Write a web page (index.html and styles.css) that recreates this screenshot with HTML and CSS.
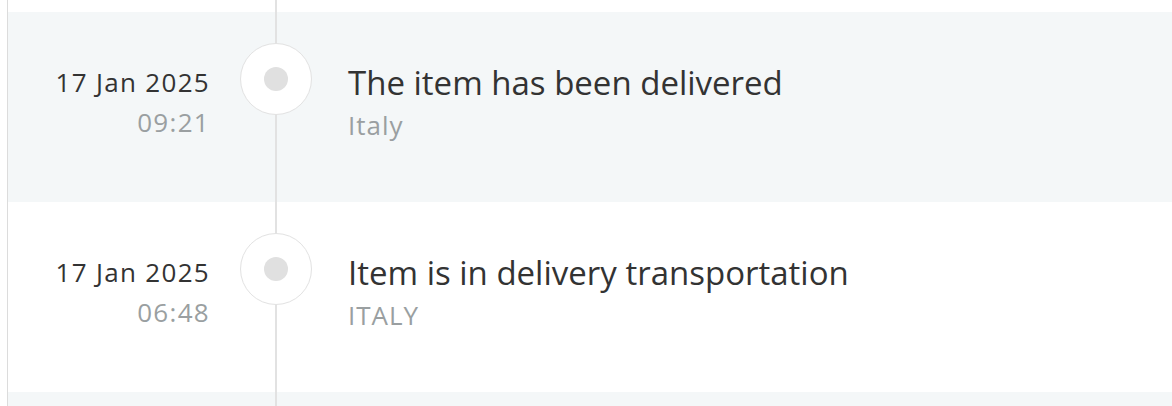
FILE: index.html
```html
<!DOCTYPE html>
<html lang="en">
<head>
    <meta charset="UTF-8">
    <meta name="viewport" content="width=device-width, initial-scale=1.0">
    <title>Tracking History</title>
    <link rel="stylesheet" href="styles.css">
</head>
<body>

    <!-- Tracking timeline -->
    <div class="timeline">
        <div class="event odd">
            <div class="event-date">
                <div class="date">17 Jan 2025</div>
                <div class="time">09:21</div>
            </div>
            <div class="event-marker"><span class="dot"></span></div>
            <div class="event-info">
                <div class="title">The item has been delivered</div>
                <div class="place">Italy</div>
            </div>
        </div>

        <div class="event">
            <div class="event-date">
                <div class="date">17 Jan 2025</div>
                <div class="time">06:48</div>
            </div>
            <div class="event-marker"><span class="dot"></span></div>
            <div class="event-info">
                <div class="title">Item is in delivery transportation</div>
                <div class="place">ITALY</div>
            </div>
        </div>

        <!-- next event starts below the fold -->
        <div class="event odd"></div>
    </div>

</body>
</html>
```

FILE: styles.css
```css
html, body {
    height: 100%;
}

body {
    font-family: "Open Sans", "Noto Sans", sans-serif;
    background-color: #fff;
    margin: 0;
    padding: 0;
    overflow: hidden;
}

.timeline {
    position: relative;
    margin-left: 7px;
    padding-top: 12px;
    border-left: 1px solid #dcdcdc;
    min-height: 100%;
    box-sizing: border-box;
}

/* vertical line behind the markers */
.timeline::before {
    content: "";
    position: absolute;
    top: 0;
    bottom: 0;
    left: 267px;
    width: 2px;
    background-color: #e2e2e2;
}

.event {
    display: flex;
    height: 190px;
    box-sizing: border-box;
    padding-top: 31px;
    background-color: #fff;
}

.event.odd {
    background-color: #f4f7f8;
}

.event-date {
    width: 202px;
    padding-right: 30px;
    text-align: right;
}

.date {
    font-size: 26px;
    line-height: 30px;
    letter-spacing: 1.3px;
    margin-top: 24px;
    color: #333;
}

.time {
    font-size: 26px;
    line-height: 50px;
    letter-spacing: 1.3px;
    color: #9a9fa1;
}

.event-marker {
    position: relative;
    width: 70px;
    height: 70px;
    border: 1px solid #e2e2e2;
    border-radius: 50%;
    background-color: #fff;
    display: flex;
    justify-content: center;
    align-items: center;
    flex-shrink: 0;
}

.dot {
    width: 24px;
    height: 24px;
    border-radius: 50%;
    background-color: #e0e0e0;
}

.event-info {
    padding-left: 36px;
}

.title {
    font-size: 33px;
    line-height: 40px;
    margin-top: 20px;
    color: #333;
}

.place {
    font-size: 26px;
    line-height: 44px;
    letter-spacing: 1px;
    color: #9a9fa1;
}
```
